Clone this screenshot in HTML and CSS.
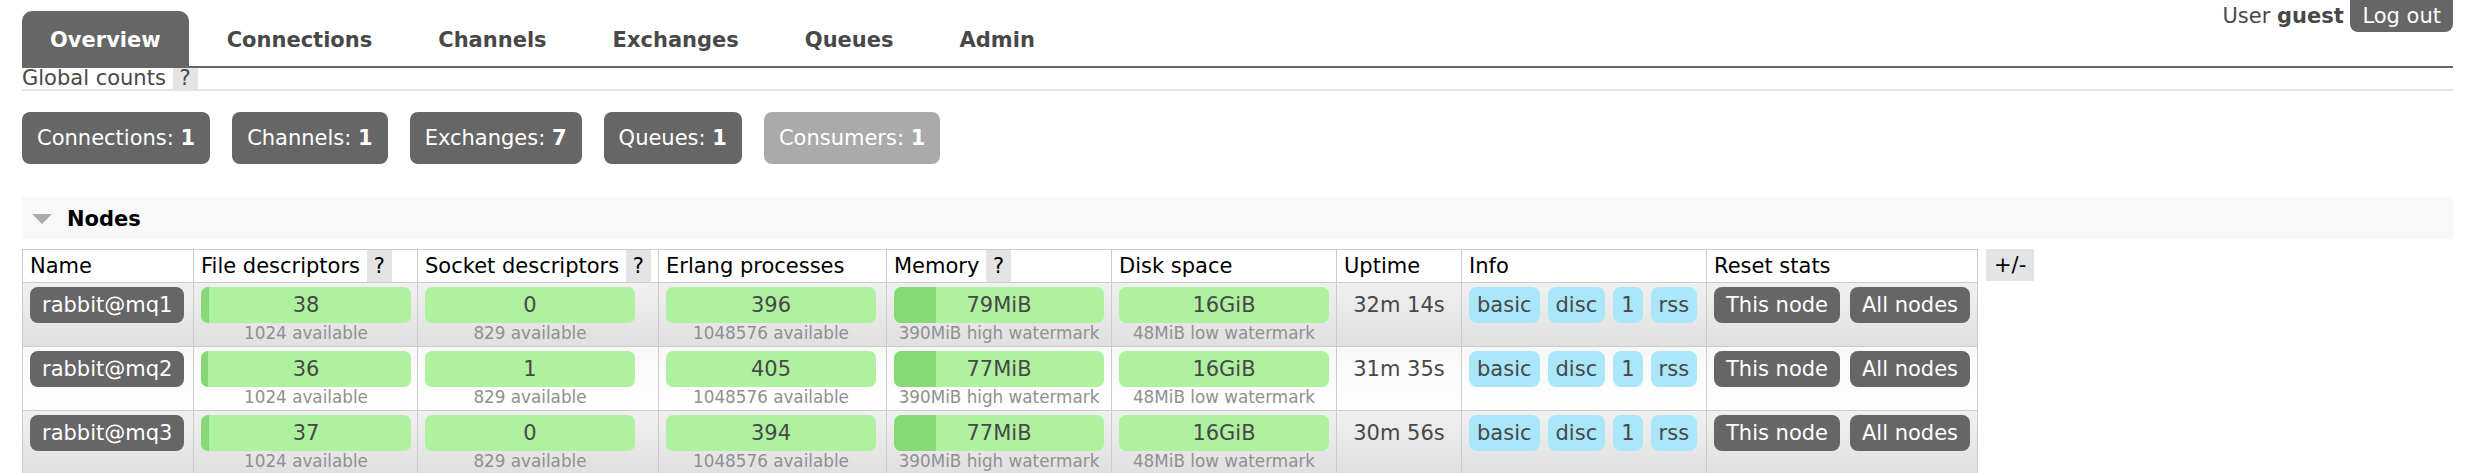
FILE: index.html
```html
<!DOCTYPE html>
<html lang="en">
<head>
<meta charset="utf-8">
<title>RabbitMQ Management</title>
<link rel="stylesheet" href="styles.css">
</head>
<body>
<div class="header">
  <ul class="tabs">
    <li class="tab active">Overview</li>
    <li class="tab">Connections</li>
    <li class="tab">Channels</li>
    <li class="tab">Exchanges</li>
    <li class="tab">Queues</li>
    <li class="tab">Admin</li>
  </ul>
  <div class="login">User <b>guest</b> <span class="logout">Log out</span></div>
</div>

<h2 class="title">Global counts <span class="help">?</span></h2>

<div class="counts">
  <span class="count">Connections: <b>1</b></span>
  <span class="count">Channels: <b>1</b></span>
  <span class="count">Exchanges: <b>7</b></span>
  <span class="count">Queues: <b>1</b></span>
  <span class="count dim">Consumers: <b>1</b></span>
</div>

<div class="section-head"><span class="tri"></span>Nodes</div>

<div class="table-wrap">
  <table class="list">
    <colgroup>
      <col class="c-name"><col class="c-fd"><col class="c-sd"><col class="c-erl"><col class="c-mem"><col class="c-disk"><col class="c-up"><col class="c-info"><col class="c-reset">
    </colgroup>
    <thead>
      <tr>
        <th>Name</th>
        <th>File descriptors <span class="help">?</span></th>
        <th>Socket descriptors <span class="help">?</span></th>
        <th>Erlang processes</th>
        <th>Memory <span class="help">?</span></th>
        <th>Disk space</th>
        <th>Uptime</th>
        <th>Info</th>
        <th>Reset stats</th>
      </tr>
    </thead>
    <tbody>
      <tr class="alt1">
        <td><span class="btn">rabbit@mq1</span></td>
        <td><div class="bar" style="--p:3.7%">38</div><div class="sub">1024 available</div></td>
        <td><div class="bar" style="--p:0%">0</div><div class="sub">829 available</div></td>
        <td><div class="bar" style="--p:0%">396</div><div class="sub">1048576 available</div></td>
        <td><div class="bar" style="--p:20%">79MiB</div><div class="sub">390MiB high watermark</div></td>
        <td><div class="bar" style="--p:0%">16GiB</div><div class="sub">48MiB low watermark</div></td>
        <td class="uptime">32m 14s</td>
        <td><div class="badges"><span class="badge">basic</span><span class="badge">disc</span><span class="badge">1</span><span class="badge">rss</span></div></td>
        <td><div class="resets"><span class="btn">This node</span><span class="btn">All nodes</span></div></td>
      </tr>
      <tr class="alt2">
        <td><span class="btn">rabbit@mq2</span></td>
        <td><div class="bar" style="--p:3.5%">36</div><div class="sub">1024 available</div></td>
        <td><div class="bar" style="--p:0.2%">1</div><div class="sub">829 available</div></td>
        <td><div class="bar" style="--p:0%">405</div><div class="sub">1048576 available</div></td>
        <td><div class="bar" style="--p:20%">77MiB</div><div class="sub">390MiB high watermark</div></td>
        <td><div class="bar" style="--p:0%">16GiB</div><div class="sub">48MiB low watermark</div></td>
        <td class="uptime">31m 35s</td>
        <td><div class="badges"><span class="badge">basic</span><span class="badge">disc</span><span class="badge">1</span><span class="badge">rss</span></div></td>
        <td><div class="resets"><span class="btn">This node</span><span class="btn">All nodes</span></div></td>
      </tr>
      <tr class="alt1">
        <td><span class="btn">rabbit@mq3</span></td>
        <td><div class="bar" style="--p:3.6%">37</div><div class="sub">1024 available</div></td>
        <td><div class="bar" style="--p:0%">0</div><div class="sub">829 available</div></td>
        <td><div class="bar" style="--p:0%">394</div><div class="sub">1048576 available</div></td>
        <td><div class="bar" style="--p:20%">77MiB</div><div class="sub">390MiB high watermark</div></td>
        <td><div class="bar" style="--p:0%">16GiB</div><div class="sub">48MiB low watermark</div></td>
        <td class="uptime">30m 56s</td>
        <td><div class="badges"><span class="badge">basic</span><span class="badge">disc</span><span class="badge">1</span><span class="badge">rss</span></div></td>
        <td><div class="resets"><span class="btn">This node</span><span class="btn">All nodes</span></div></td>
      </tr>
    </tbody>
  </table>
  <span class="plusminus">+/-</span>
</div>
</body>
</html>
```

FILE: styles.css
```css
html, body {
  margin: 0;
  background: #fff;
}
body {
  padding: 0 28px 0 22px;
  font-family: "DejaVu Sans", Verdana, sans-serif;
  font-size: 21px;
  color: #484848;
}

/* header */
.header {
  display: flex;
  justify-content: space-between;
  align-items: flex-start;
  border-bottom: 2px solid #666;
}
.tabs {
  display: flex;
  gap: 10px;
  list-style: none;
  margin: 11px 0 0;
  padding: 0;
}
.tab {
  padding: 18px 28px 15px;
  line-height: 22px;
  font-weight: bold;
  color: #484848;
  border-radius: 10px 10px 0 0;
}
.tab.active {
  background: #666;
  color: #fff;
}
.login {
  line-height: 32px;
  white-space: nowrap;
}
.logout {
  display: inline-block;
  background: #666;
  color: #fff;
  padding: 0 12px;
  border-radius: 0 0 8px 8px;
}

/* global counts */
.title {
  margin: 0;
  font-size: 21px;
  font-weight: normal;
  line-height: 21px;
  border-bottom: 2px solid #e4e4e4;
}
.help {
  display: inline-block;
  background: #e4e4e4;
  padding: 0 7px;
}
.counts {
  display: flex;
  gap: 22px;
  margin-top: 21px;
}
.count {
  background: #666;
  color: #fff;
  padding: 13px 15px;
  line-height: 26px;
  border-radius: 8px;
}
.count.dim {
  background: #aaa;
}

/* nodes section */
.section-head {
  margin-top: 33px;
  height: 42px;
  display: flex;
  align-items: center;
  padding: 2px 0 0 10px;
  box-sizing: border-box;
  background: #f8f8f8;
  font-weight: bold;
  color: #000;
}
.tri {
  width: 0;
  height: 0;
  border-left: 10px solid transparent;
  border-right: 10px solid transparent;
  border-top: 10px solid #aaa;
  margin-right: 15px;
}

.table-wrap {
  display: flex;
  align-items: flex-start;
  gap: 8px;
  margin-top: 10px;
}
table.list {
  border-collapse: collapse;
  table-layout: fixed;
  width: 1955px;
  flex: none;
}
.c-name { width: 171px; }
.c-fd { width: 224px; }
.c-sd { width: 241px; }
.c-erl { width: 228px; }
.c-mem { width: 225px; }
.c-disk { width: 225px; }
.c-up { width: 125px; }
.c-info { width: 245px; }
.c-reset { width: 271px; }

table.list th,
table.list td {
  border: 1px solid #ccc;
}
table.list th {
  text-align: left;
  font-weight: normal;
  color: #000;
  padding: 0 7px;
  line-height: 32px;
  background: #fff;
  white-space: nowrap;
}
table.list th .help {
  line-height: 32px;
  color: #000;
}
table.list td {
  vertical-align: top;
  padding: 4px 7px 3px;
}
tr.alt1 {
  background: linear-gradient(#f0f0f0, #e0e0e0);
}
tr.alt2 {
  background: linear-gradient(#f8f8f8, #ffffff);
}

.btn {
  display: inline-block;
  background: #666;
  color: #fff;
  padding: 0 12px;
  line-height: 36px;
  border-radius: 8px;
  white-space: nowrap;
}
.bar {
  width: 210px;
  height: 36px;
  line-height: 36px;
  text-align: center;
  border-radius: 7px;
  background: linear-gradient(to right, #86d976 var(--p), #aef2a0 var(--p));
}
.sub {
  width: 210px;
  text-align: center;
  font-size: 16.8px;
  line-height: 20px;
  color: #909090;
  white-space: nowrap;
}
td.uptime {
  text-align: center;
  line-height: 36px;
}
.badges {
  display: flex;
  gap: 8px;
}
.badge {
  background: #aae7fa;
  padding: 0 8px;
  line-height: 36px;
  border-radius: 8px;
}
.resets {
  display: flex;
  gap: 10px;
}
.plusminus {
  background: #e4e4e4;
  color: #000;
  padding: 0 8px;
  line-height: 32px;
}
```
